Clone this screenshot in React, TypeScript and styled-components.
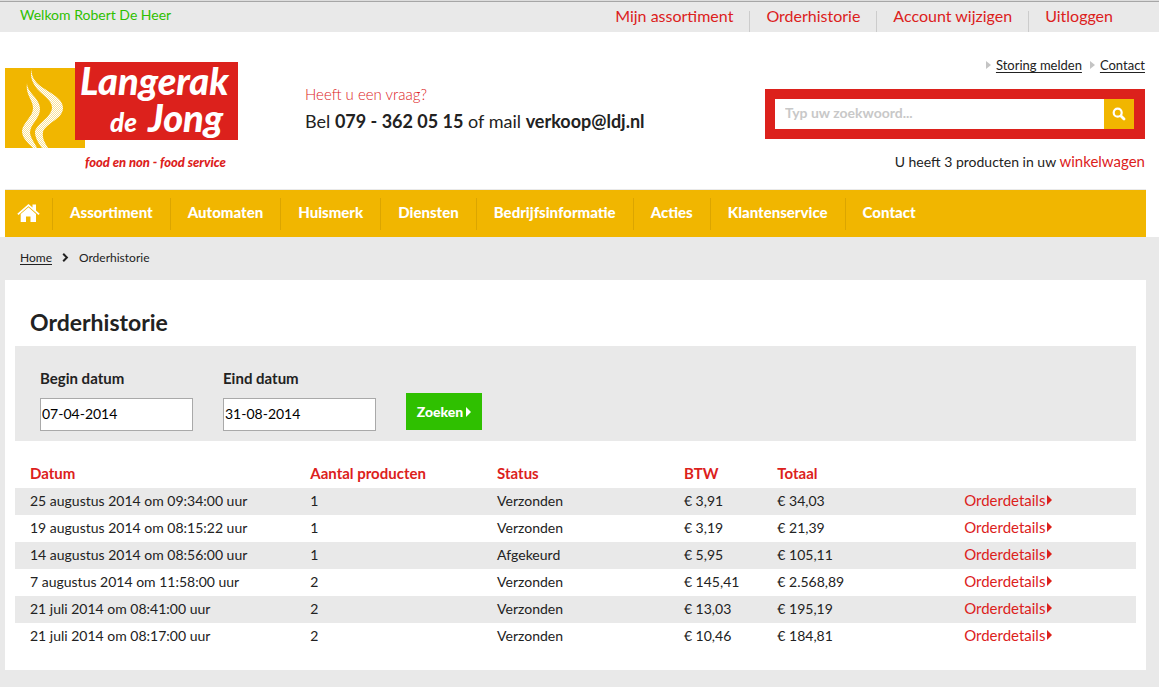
import React from 'react';
import styled, { createGlobalStyle } from 'styled-components';

const color = {
  red: '#dc211c',
  yellow: '#f1b600',
  green: '#2fc000',
  grey: '#e9e9e9',
  text: '#222222',
};

const GlobalStyle = createGlobalStyle`
  *, *::before, *::after { box-sizing: border-box; }
  body {
    margin: 0;
    background: ${color.grey};
    color: ${color.text};
    font: 14px/20px Lato, "Open Sans", sans-serif;
  }
  a { color: inherit; text-decoration: none; }
  input, button { font: inherit; border-radius: 0; }
`;

const TopBar = styled.div`
  display: flex;
  justify-content: space-between;
  height: 32px;
  padding: 0 30px 0 20px;
  border-top: 1px solid #dddddd;
  box-shadow: inset 0 1px 0 #a6a6a6;
`;

const Welcome = styled.span`
  color: ${color.green};
  line-height: 28px;
`;

const AccountNav = styled.nav`
  display: flex;
  align-items: flex-end;
`;

const AccountLink = styled.a`
  height: 21px;
  padding: 0 16px;
  color: ${color.red};
  font-size: 16px;
  line-height: 10px;
  & + & { border-left: 1px solid #cccccc; }
`;

const HeaderArea = styled.div`
  background: #ffffff;
  padding: 0 13px 0 5px;
`;

const Header = styled.header`
  display: flex;
  height: 158px;
  border-bottom: 1px solid ${color.grey};
`;

const Logo = styled.svg`
  flex: none;
  display: block;
  width: 240px;
  height: 120px;
  margin-top: 25px;
`;

const Question = styled.div`
  margin: 52px 0 0 60px;
`;

const QuestionTitle = styled.p`
  margin: 0;
  color: ${color.red};
  font-size: 15px;
  font-weight: 300;
`;

const QuestionText = styled.p`
  margin: 0;
  font-size: 18px;
  line-height: 34px;
  b { font-weight: 700; }
`;

const Tools = styled.div`
  display: flex;
  flex-direction: column;
  align-items: flex-end;
  width: 380px;
  margin: 0 1px 0 auto;
`;

const ServiceLinks = styled.div`
  display: flex;
  gap: 8px;
  margin-top: 23px;
  font-size: 13px;
`;

const ServiceLink = styled.a`
  display: flex;
  align-items: center;
  gap: 5px;
  span { text-decoration: underline; text-underline-offset: 2px; }
`;

const Caret = styled.i<{ $color?: string; $size?: number }>`
  display: inline-block;
  width: 0;
  height: 0;
  border: ${p => p.$size ?? 4}px solid transparent;
  border-left: 5px solid ${p => p.$color ?? 'currentColor'};
  border-right: 0;
`;

const Search = styled.form`
  display: flex;
  width: 100%;
  margin: 14px 0 0;
  padding: 10px 11px 10px 10px;
  background: ${color.red};
`;

const SearchInput = styled.input`
  flex: 1;
  min-width: 0;
  height: 30px;
  padding: 0 10px 4px;
  border: 0;
  background: #ffffff;
  font-weight: 700;
  &::placeholder { color: #c8c8c8; opacity: 1; }
`;

const SearchButton = styled.button`
  display: grid;
  place-items: center;
  width: 30px;
  height: 30px;
  padding: 0;
  border: 0;
  background: ${color.yellow};
`;

const TextLink = styled.a`
  color: ${color.red};
  font-size: 15px;
`;

const Cart = styled.p`
  margin: 12px 0 0;
`;

const MainNav = styled.nav`
  display: flex;
  align-items: center;
  height: 47px;
  background: ${color.yellow};
`;

const NavLink = styled.a`
  display: flex;
  align-items: center;
  height: 32px;
  padding: 0 17px 4px;
  color: #ffffff;
  font-size: 15px;
  font-weight: 900;
  & + & { border-left: 1px solid #dba500; }
`;

const HomeLink = styled(NavLink)`
  padding: 0 12px 2px;
`;

const Breadcrumb = styled.nav`
  display: flex;
  align-items: center;
  gap: 10px;
  height: 43px;
  padding: 0 20px 2px;
  font-size: 12px;
  a { text-decoration: underline; text-underline-offset: 2px; }
`;

const Panel = styled.main`
  margin: 0 13px 17px 5px;
  padding: 29px 10px 20px;
  background: #ffffff;
`;

const Title = styled.h1`
  margin: 0;
  padding: 0 15px;
  font-size: 23px;
  line-height: 26px;
  font-weight: 700;
`;

const Filter = styled.form`
  display: flex;
  gap: 30px;
  margin: 11px 0 0;
  height: 95px;
  padding: 22px 25px 0;
  background: ${color.grey};
`;

const Field = styled.label`
  display: flex;
  flex-direction: column;
  gap: 10px;
  width: 153px;
  font-size: 15px;
  font-weight: 700;
`;

const DateInput = styled.input`
  width: 100%;
  height: 33px;
  padding: 0 1px 2px;
  border: 1px solid #a9a9a9;
  background: #ffffff;
  color: #000000;
  font-size: 14px;
  font-weight: 400;
`;

const Submit = styled.button`
  display: flex;
  align-items: center;
  justify-content: center;
  gap: 3px;
  width: 76px;
  height: 37px;
  margin-top: 25px;
  padding: 0;
  border: 0;
  background: ${color.green};
  color: #ffffff;
  font-weight: 900;
`;

const Orders = styled.table`
  width: 100%;
  margin-top: 20px;
  border-collapse: collapse;
  table-layout: fixed;
  th, td {
    height: 27px;
    padding: 0 0 2px 15px;
    text-align: left;
  }
  th {
    padding-bottom: 4px;
    color: ${color.red};
    font-size: 15px;
    font-weight: 700;
  }
  tbody tr:nth-child(odd) { background: ${color.grey}; }
`;

const DetailLink = styled(TextLink)`
  display: flex;
  align-items: center;
  gap: 2px;
  padding-bottom: 2px;
`;

const orders = [
  ['25 augustus 2014 om 09:34:00 uur', '1', 'Verzonden', '€ 3,91', '€ 34,03'],
  ['19 augustus 2014 om 08:15:22 uur', '1', 'Verzonden', '€ 3,19', '€ 21,39'],
  ['14 augustus 2014 om 08:56:00 uur', '1', 'Afgekeurd', '€ 5,95', '€ 105,11'],
  ['7 augustus 2014 om 11:58:00 uur', '2', 'Verzonden', '€ 145,41', '€ 2.568,89'],
  ['21 juli 2014 om 08:41:00 uur', '2', 'Verzonden', '€ 13,03', '€ 195,19'],
  ['21 juli 2014 om 08:17:00 uur', '2', 'Verzonden', '€ 10,46', '€ 184,81'],
];

const columnShares = [3, 2, 2, 1, 2, 2];

const LangerakLogo = () => (
  <Logo viewBox="0 0 240 120" role="img" aria-label="Langerak de Jong">
    <defs>
      <pattern id="grain" width="2" height="2" patternUnits="userSpaceOnUse">
        <rect width="2" height="2" fill="#fff" fillOpacity=".6" />
        <rect width="1" height="1" fill="#fff" />
        <rect x="1" y="1" width="1" height="1" fill="#fff" />
      </pattern>
    </defs>
    <rect x="0" y="11" width="80" height="80" fill={color.yellow} />
    <path
      fill="url(#grain)"
      d="M27 12 C26 17 28 22 33 27 C42 35 58 40 58 51 C58 62 41 66 38 75 C37 81 40 86 43 91 L37 91 C33 86 30 80 30 75 C31 67 46 61 47 51 C47 42 36 38 30 29 C26 23 25 17 27 12Z"
    />
    <path
      fill="url(#grain)"
      d="M22 26 C22 36 35 41 35 52 C35 62 25 67 25 76 C26 82 30 86 32 91 L28 91 C23 86 17 81 17 74 C18 65 28 60 28 51 C28 43 20 37 22 26Z"
    />
    <rect x="70" y="5" width="163" height="78" fill={color.red} />
    <g fill="#fff" fontFamily="Lato, sans-serif" fontWeight="900" fontStyle="italic">
      <text x="75" y="38" fontSize="38">Langerak</text>
      <text x="105" y="75" fontSize="26">de</text>
      <text x="143" y="75" fontSize="38">Jong</text>
      <text x="80" y="110" fontSize="13" fill={color.red}>food en non - food service</text>
    </g>
  </Logo>
);

const HomeIcon = () => (
  <svg width="23" height="18" viewBox="0 0 23 18" fill="#fff" aria-hidden="true">
    <path d="M11.500 0 L15.500 3.500 V.5 H19 V6.500 L22.700 9.800 L21.500 11 L11.500 2.200 L1.500 11 L.3 9.800Z" />
    <path d="M11.500 3.300 L19 10 V18 H13.500 V12.500 H9 V18 H3.700 V10Z" />
  </svg>
);

const SearchIcon = () => (
  <svg width="14" height="14" viewBox="0 0 14 14" fill="none" stroke="#fff" strokeLinecap="round" aria-hidden="true">
    <circle cx="5.700" cy="5.700" r="4" strokeWidth="2.200" />
    <path d="M9 9l3 3" strokeWidth="2.800" />
  </svg>
);

const ChevronIcon = () => (
  <svg width="7" height="9" viewBox="0 0 7 9" fill="none" stroke="#222" strokeWidth="2" aria-hidden="true">
    <path d="M1.200 .8l3.700 3.700L1.200 8.200" />
  </svg>
);

export default function App() {
  return (
    <>
      <GlobalStyle />
      <TopBar>
        <Welcome>Welkom Robert De Heer</Welcome>
        <AccountNav>
          {['Mijn assortiment', 'Orderhistorie', 'Account wijzigen', 'Uitloggen'].map(label => (
            <AccountLink href="#" key={label}>{label}</AccountLink>
          ))}
        </AccountNav>
      </TopBar>

      <HeaderArea>
        <Header>
          <LangerakLogo />
          <Question>
            <QuestionTitle>Heeft u een vraag?</QuestionTitle>
            <QuestionText>Bel <b>079 - 362 05 15</b> of mail <b>verkoop@ldj.nl</b></QuestionText>
          </Question>
          <Tools>
            <ServiceLinks>
              <ServiceLink href="#"><Caret $color="#c4c4c4" /><span>Storing melden</span></ServiceLink>
              <ServiceLink href="#"><Caret $color="#c4c4c4" /><span>Contact</span></ServiceLink>
            </ServiceLinks>
            <Search>
              <SearchInput type="text" placeholder="Typ uw zoekwoord..." aria-label="Zoekwoord" />
              <SearchButton type="button" aria-label="Zoeken"><SearchIcon /></SearchButton>
            </Search>
            <Cart>U heeft 3 producten in uw <TextLink href="#">winkelwagen</TextLink></Cart>
          </Tools>
        </Header>
        <MainNav>
          <HomeLink href="#" aria-label="Home"><HomeIcon /></HomeLink>
          {['Assortiment', 'Automaten', 'Huismerk', 'Diensten', 'Bedrijfsinformatie', 'Acties', 'Klantenservice', 'Contact'].map(label => (
            <NavLink href="#" key={label}>{label}</NavLink>
          ))}
        </MainNav>
      </HeaderArea>

      <Breadcrumb>
        <a href="#">Home</a>
        <ChevronIcon />
        <span>Orderhistorie</span>
      </Breadcrumb>

      <Panel>
        <Title>Orderhistorie</Title>
        <Filter>
          <Field>Begin datum<DateInput type="text" defaultValue="07-04-2014" /></Field>
          <Field>Eind datum<DateInput type="text" defaultValue="31-08-2014" /></Field>
          <Submit type="button">Zoeken<Caret $size={5} /></Submit>
        </Filter>
        <Orders>
          <colgroup>
            {columnShares.map((share, i) => (
              <col key={i} style={{ width: `${(share / 12) * 100}%` }} />
            ))}
          </colgroup>
          <thead>
            <tr>
              <th>Datum</th>
              <th>Aantal producten</th>
              <th>Status</th>
              <th>BTW</th>
              <th>Totaal</th>
              <th aria-label="Details" />
            </tr>
          </thead>
          <tbody>
            {orders.map(cells => (
              <tr key={cells[0]}>
                {cells.map((cell, i) => <td key={i}>{cell}</td>)}
                <td><DetailLink href="#">Orderdetails<Caret $size={5} /></DetailLink></td>
              </tr>
            ))}
          </tbody>
        </Orders>
      </Panel>
    </>
  );
}
